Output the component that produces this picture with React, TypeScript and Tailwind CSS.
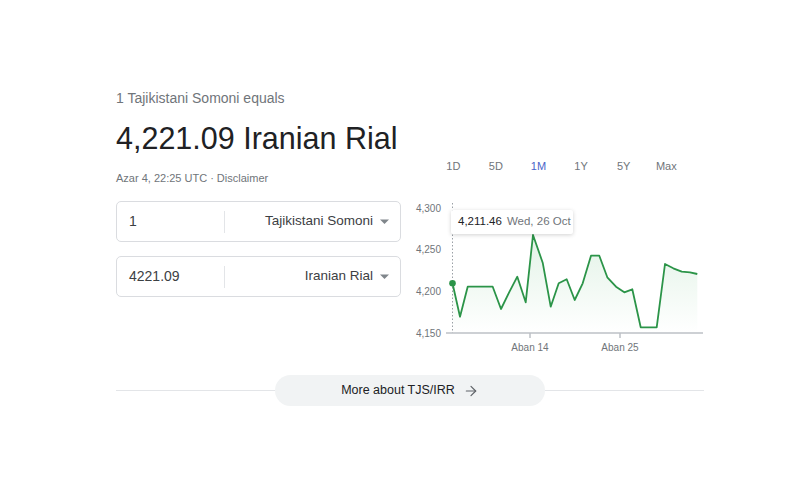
import { ArrowRight } from 'lucide-react';

const TABS = ['1D', '5D', '1M', '1Y', '5Y', 'Max'];

// chart points in svg coordinates (294 x 160 box)
const POINTS: [number, number][] = [
  [42.5, 88.3], [50, 121.7], [57.7, 91.7], [82.7, 91.7], [91, 114], [99, 97.7],
  [107.3, 81.7], [115.7, 107.3], [123, 40], [132.7, 67.7], [140.7, 111.7],
  [148.7, 88.3], [156.7, 84.3], [164.7, 105], [172.7, 88.3], [181, 60.7],
  [189.3, 60.7], [197.3, 82.3], [206, 91.7], [214.3, 97.3], [222.3, 94.3],
  [230.7, 132.3], [246.7, 132.3], [255, 69], [263.3, 73.3], [271.7, 76.7],
  [280, 77.3], [287.3, 79],
];

const Y_LABELS: [string, number][] = [
  ['4,300', 13],
  ['4,250', 54],
  ['4,200', 96],
  ['4,150', 138],
];

function Caret() {
  return (
    <svg width="9" height="5" viewBox="0 0 9 5" className="shrink-0">
      <path d="M0 0.5 L9 0.5 L4.5 5 Z" fill="#80868b" />
    </svg>
  );
}

function CurrencyBox({ value, currency }: { value: string; currency: string }) {
  return (
    <div className="h-[41px] border border-[#dadce0] rounded-[5px] flex items-center">
      <div className="w-[107px] pl-[12px] text-[14px] text-[#3c4043]">{value}</div>
      <div className="w-px h-[22px] bg-[#e3e5e8]" />
      <div className="flex-1 flex items-center justify-end gap-[7px] pr-[11px]">
        <span className="text-[13.5px] text-[#3c4043]">{currency}</span>
        <Caret />
      </div>
    </div>
  );
}

function Chart() {
  const line = POINTS.map(([x, y], i) => `${i === 0 ? 'M' : 'L'}${x} ${y}`).join(' ');
  const area = `${line} L287.3 138 L42.5 138 Z`;
  return (
    <div className="relative w-[294px] h-[160px]">
      <svg width="294" height="160" viewBox="0 0 294 160">
        <defs>
          <linearGradient id="fillGreen" x1="0" y1="0" x2="0" y2="1">
            <stop offset="0%" stopColor="#34a853" stopOpacity="0.14" />
            <stop offset="100%" stopColor="#34a853" stopOpacity="0" />
          </linearGradient>
        </defs>
        {Y_LABELS.map(([t, y]) => (
          <text key={t} x="31" y={y + 3.5} textAnchor="end" fontSize="10" fill="#70757a" fontFamily="'Liberation Sans', Arial, sans-serif">
            {t}
          </text>
        ))}
        <line x1="42.5" y1="8" x2="42.5" y2="138" stroke="#9aa0a6" strokeWidth="1" strokeDasharray="1.5 2" />
        <path d={area} fill="url(#fillGreen)" />
        <line x1="36" y1="138" x2="293" y2="138" stroke="#bdc1c6" strokeWidth="1.5" />
        <line x1="120" y1="138" x2="120" y2="143" stroke="#bdc1c6" strokeWidth="1.5" />
        <line x1="210" y1="138" x2="210" y2="143" stroke="#bdc1c6" strokeWidth="1.5" />
        <path d={line} fill="none" stroke="#2b9448" strokeWidth="1.8" strokeLinejoin="round" />
        <circle cx="42.5" cy="88.3" r="3.3" fill="#2b9448" />
        <text x="120" y="155.5" textAnchor="middle" fontSize="10" fill="#70757a" fontFamily="'Liberation Sans', Arial, sans-serif">
          Aban 14
        </text>
        <text x="210" y="155.5" textAnchor="middle" fontSize="10" fill="#70757a" fontFamily="'Liberation Sans', Arial, sans-serif">
          Aban 25
        </text>
      </svg>
      <div className="absolute left-[41px] top-[15px] w-[122px] h-[24px] bg-white rounded-[2px] shadow-[0_1px_4px_rgba(0,0,0,0.18)] flex items-center px-[7px] gap-[5px] text-[11.5px] whitespace-nowrap">
        <span className="text-[#202124]">4,211.46</span>
        <span className="text-[#70757a]">Wed, 26 Oct</span>
      </div>
    </div>
  );
}

export default function App() {
  return (
    <div className="w-[800px] h-[500px] bg-white font-['Liberation_Sans',Arial,sans-serif] overflow-hidden">
      <div className="w-[588px] ml-[116px] pt-[90px]">
        <div className="text-[14px] leading-[16px] text-[#70757a]">1 Tajikistani Somoni equals</div>
        <div className="mt-[14px] text-[30.5px] leading-[36px] text-[#202124]">4,221.09 Iranian Rial</div>

        <div className="flex gap-[9px]">
          {/* left: timestamp + converters */}
          <div className="w-[285px]">
            <div className="mt-[15px] text-[11px] leading-[14px] text-[#70757a]">
              Azar 4, 22:25 UTC · Disclaimer
            </div>
            <div className="mt-[16px] flex flex-col gap-[14px]">
              <CurrencyBox value="1" currency="Tajikistani Somoni" />
              <CurrencyBox value="4221.09" currency="Iranian Rial" />
            </div>
          </div>

          {/* right: range tabs + chart */}
          <div className="w-[294px]">
            <div className="mt-[3px] flex pl-[22px] text-[11px] leading-[14px]">
              {TABS.map((t) => (
                <div
                  key={t}
                  className={`w-[42.6px] text-center ${t === '1M' ? 'text-[#4a65c9]' : 'text-[#70757a]'}`}
                >
                  {t}
                </div>
              ))}
            </div>
            <div className="mt-[22px]">
              <Chart />
            </div>
          </div>
        </div>

        {/* more about */}
        <div className="relative mt-[20px] h-[31px] flex items-center justify-center">
          <div className="absolute left-0 right-0 top-[15px] h-px bg-[#e3e5e8]" />
          <div className="relative w-[270px] h-[31px] rounded-full bg-[#f1f3f4] flex items-center justify-center gap-[8px]">
            <span className="text-[12.5px] text-[#202124]">More about TJS/IRR</span>
            <ArrowRight size={16} color="#5f6368" strokeWidth={1.8} />
          </div>
        </div>
      </div>
    </div>
  );
}
